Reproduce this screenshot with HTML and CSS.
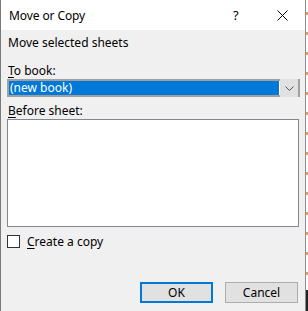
FILE: index.html
```html
<!DOCTYPE html>
<html lang="en">

<head>
  <meta charset="UTF-8">
  <title>Move or Copy</title>
  <link rel="stylesheet" href="styles.css">
</head>

<body>

  <div class="dialog">
    <!-- Title Bar -->
    <div class="titlebar">
      <span class="title">Move or Copy</span>
      <span class="help">?</span>
      <span class="close">
        <svg width="11" height="11" viewBox="0 0 11 11">
          <path d="M0.5 0.5 L10.5 10.5 M10.5 0.5 L0.5 10.5" stroke="#000" stroke-width="1" fill="none" />
        </svg>
      </span>
    </div>

    <!-- Dialog Body -->
    <div class="content">
      <div class="text intro">Move selected sheets</div>

      <div class="text field-label"><u>T</u>o book:</div>
      <div class="combo">
        <div class="combo-value">(new book)</div>
        <div class="combo-arrow">
          <svg width="9" height="5" viewBox="0 0 9 5">
            <path d="M0.5 0.5 L4.5 4.5 L8.5 0.5" stroke="#555" stroke-width="1" fill="none" />
          </svg>
        </div>
      </div>

      <div class="text field-label before"><u>B</u>efore sheet:</div>
      <div class="listbox"></div>

      <label class="check-row">
        <span class="checkbox"></span>
        <span class="text"><u>C</u>reate a copy</span>
      </label>

      <div class="buttons">
        <button class="btn default">OK</button>
        <button class="btn">Cancel</button>
      </div>
    </div>
  </div>

  <div class="backdrop">
    <div class="backdrop-top"></div>
    <div class="backdrop-bottom"></div>
  </div>

</body>

</html>
```

FILE: styles.css
```css
/* General Page */
body {
  margin: 0;
  width: 308px;
  height: 311px;
  display: flex;
  overflow: hidden;
  font-family: 'Noto Sans', 'Open Sans', sans-serif;
  font-size: 12px;
  color: #000;
  background: #fff;
}

/* Dialog Window */
.dialog {
  width: 304px;
  height: 311px;
  border-left: 1px solid #7a7a7a;
  border-right: 1px solid #8c8c8c;
  background: #f0f0f0;
  display: flex;
  flex-direction: column;
}

/* Title Bar */
.titlebar {
  height: 30px;
  background: #fff;
  display: flex;
  align-items: center;
  padding-left: 8px;
  flex-shrink: 0;
}

.title {
  flex: 1;
  letter-spacing: -0.1px;
}

.help {
  width: 12px;
  font-size: 13px;
  margin-right: 32px;
}

.close {
  width: 11px;
  height: 11px;
  margin-right: 17px;
  display: flex;
}

/* Body */
.content {
  padding: 5px 6px 0 6px;
  display: flex;
  flex-direction: column;
  flex: 1;
}

.text {
  line-height: 16px;
  height: 16px;
}

.intro {
  padding-left: 1px;
}

.field-label {
  margin-top: 12px;
  padding-left: 1px;
}

.before {
  margin-top: 6px;
}

u {
  text-underline-offset: 2px;
}

/* Combo Box */
.combo {
  height: 14px;
  border: 2px solid #a0a0a0;
  background: #fff;
  display: flex;
  padding: 0 1px 0 0;
  width: 288px;
}

.combo-value {
  flex: 1;
  margin: 0 1px 0 0;
  background: #0078d7;
  color: #fff;
  line-height: 14px;
  padding-left: 1px;
}

.combo-arrow {
  width: 18px;
  background: #e1e1e1;
  display: flex;
  align-items: center;
  justify-content: center;
  margin: -2px -1px -2px 0;
}

/* List Box */
.listbox {
  height: 106px;
  width: 290px;
  border: 1px solid #828790;
  background: #fff;
}

/* Checkbox */
.check-row {
  display: flex;
  align-items: center;
  margin-top: 8px;
  height: 13px;
}

.checkbox {
  width: 11px;
  height: 11px;
  border: 1px solid #333;
  background: #fff;
  margin-right: 7px;
}

/* Buttons */
.buttons {
  margin-top: auto;
  margin-bottom: 8px;
  display: flex;
  justify-content: flex-end;
  gap: 12px;
  padding-right: 1px;
}

.btn {
  width: 73px;
  height: 21px;
  border: 1px solid #adadad;
  background: #e1e1e1;
  font-family: inherit;
  font-size: 12px;
  padding: 0;
  color: #000;
}

.btn.default {
  border: 2px solid #0078d7;
}

/* Background behind dialog */
.backdrop {
  width: 2px;
  display: flex;
  flex-direction: column;
}

.backdrop-top {
  flex: 1;
  background: repeating-linear-gradient(#fff 0 12px, #d9a35a 12px 15px, #fff 15px 20px);
}

.backdrop-bottom {
  height: 21px;
  background: #222;
}
```
